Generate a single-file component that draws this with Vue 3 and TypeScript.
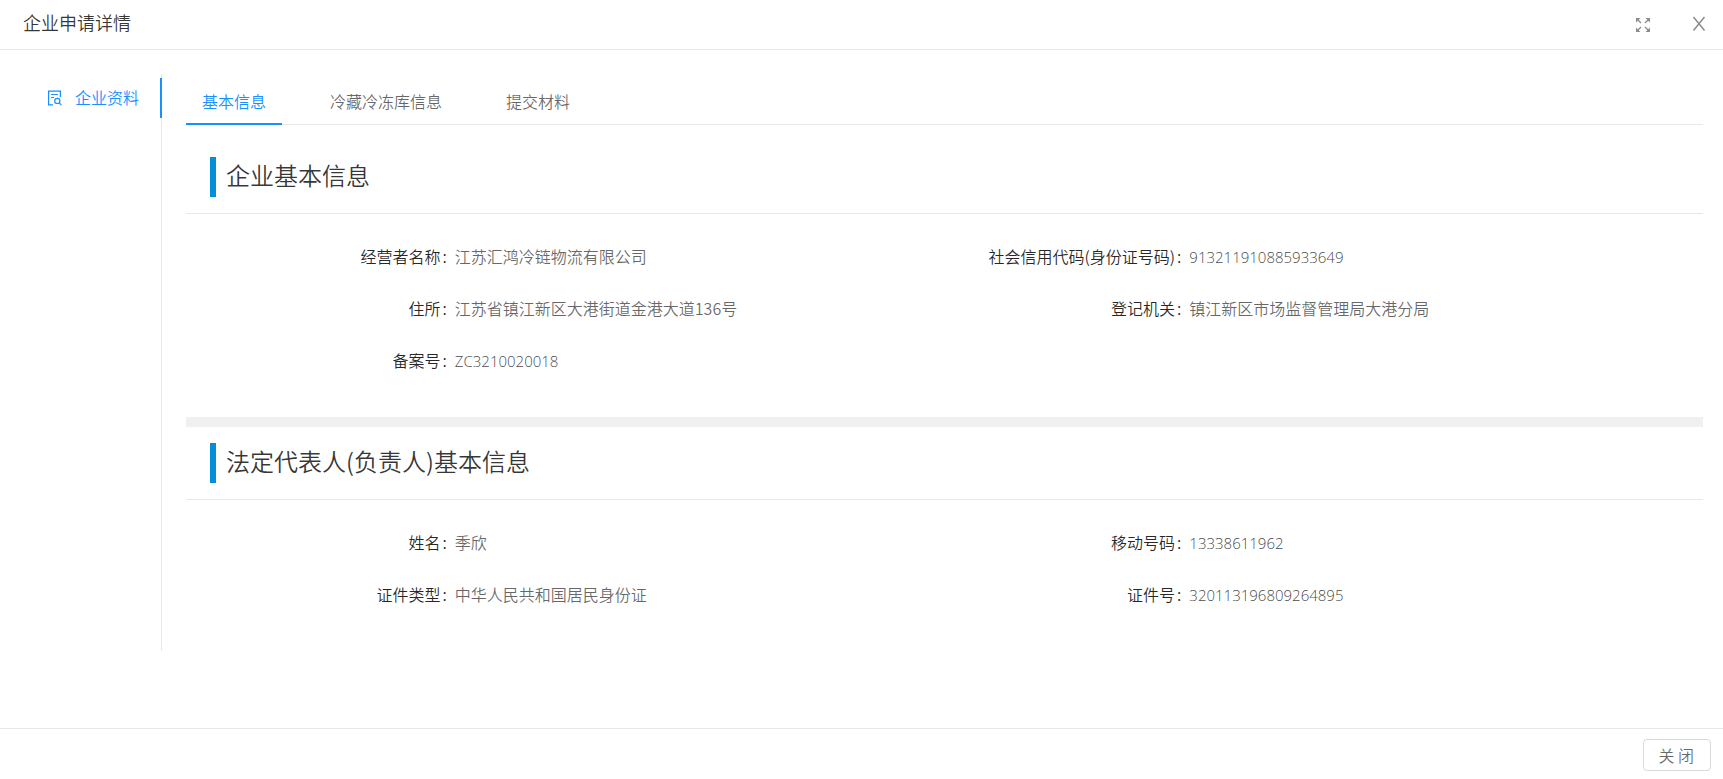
<script setup lang="ts">
import { ref } from 'vue'

interface Field {
  label: string
  value: string
  numeric?: boolean
}

interface Section {
  title: string
  fields: Field[]
}

const tabs: string[] = ['基本信息', '冷藏冷冻库信息', '提交材料']
const activeTab = ref<number>(0)

const sections: Section[] = [
  {
    title: '企业基本信息',
    fields: [
      { label: '经营者名称', value: '江苏汇鸿冷链物流有限公司' },
      { label: '社会信用代码(身份证号码)', value: '913211910885933649', numeric: true },
      { label: '住所', value: '江苏省镇江新区大港街道金港大道136号' },
      { label: '登记机关', value: '镇江新区市场监督管理局大港分局' },
      { label: '备案号', value: 'ZC3210020018', numeric: true },
    ],
  },
  {
    title: '法定代表人(负责人)基本信息',
    fields: [
      { label: '姓名', value: '季欣' },
      { label: '移动号码', value: '13338611962', numeric: true },
      { label: '证件类型', value: '中华人民共和国居民身份证' },
      { label: '证件号', value: '320113196809264895', numeric: true },
    ],
  },
]
</script>

<template>
  <div class="dialog" role="dialog" aria-labelledby="dialog-title">
    <header class="header">
      <h1 id="dialog-title" class="title">企业申请详情</h1>
      <div class="tools">
        <button type="button" class="tool" aria-label="全屏">
          <svg width="14" height="14" viewBox="0 0 14 14" fill="none" stroke="currentColor">
            <path stroke-width="1.3" d="M1 1L5 5M13 1L9 5M1 13L5 9M13 13L9 9" />
            <path fill="currentColor" stroke="none" d="M0 0H4.5L0 4.5ZM14 0V4.5L9.5 0ZM0 14V9.5L4.5 14ZM14 14H9.5L14 9.5Z" />
          </svg>
        </button>
        <button type="button" class="tool close-icon" aria-label="关闭窗口">
          <svg width="14" height="16" viewBox="0 0 14 16" fill="none" stroke="currentColor" stroke-width="1.5">
            <path d="M1.5 1L12.5 14.5M12.5 1L1.5 14.5" />
          </svg>
        </button>
      </div>
    </header>

    <div class="body">
      <nav class="side">
        <a href="#" class="side-item" aria-current="page" @click.prevent>
          <svg class="side-icon" width="16" height="16" viewBox="0 0 16 16" fill="none" stroke="currentColor">
            <path stroke-width="1.2" d="M6 14.9H1.6V1.1H13.4V7M4 4.5H11M4 7.5H7" />
            <circle cx="10.3" cy="10.9" r="2.6" stroke-width="1.2" />
            <path stroke-width="1.2" d="M12.2 12.8L14.4 15.2" />
          </svg>
          <span class="side-text">企业资料</span>
        </a>
      </nav>

      <main class="content">
        <div class="tabs" role="tablist">
          <button
            v-for="(tab, index) in tabs"
            :key="tab"
            type="button"
            role="tab"
            class="tab"
            :class="{ active: index === activeTab }"
            :aria-selected="index === activeTab"
            @click="activeTab = index"
          >{{ tab }}</button>
        </div>

        <section v-for="section in sections" :key="section.title" class="section">
          <div class="section-head">
            <h2 class="section-title">{{ section.title }}</h2>
          </div>
          <dl class="fields">
            <div v-for="field in section.fields" :key="field.label" class="field">
              <dt class="label">{{ field.label }}</dt>
              <dd class="value" :class="{ numeric: field.numeric }">{{ field.value }}</dd>
            </div>
          </dl>
        </section>
      </main>
    </div>

    <footer class="footer">
      <button type="button" class="close">关 闭</button>
    </footer>
  </div>
</template>

<style>
body {
  background: #fff;
}
</style>

<style scoped>
.dialog {
  display: flex;
  flex-direction: column;
  box-sizing: border-box;
  min-height: 100vh;
  font-family: "Noto Sans CJK SC", sans-serif;
  font-size: 16px;
  font-weight: 350;
  line-height: 24px;
  color: rgba(0, 0, 0, 0.6);
}

button {
  margin: 0;
  font: inherit;
  color: inherit;
  background: none;
  border: 0;
  cursor: pointer;
}

.header {
  display: flex;
  align-items: center;
  justify-content: space-between;
  height: 49px;
  padding: 0 17px 0 23px;
  border-bottom: 1px solid #e8e8e8;
}

.title {
  margin: 0 0 6px;
  font-size: 18px;
  font-weight: 350;
  color: rgba(0, 0, 0, 0.8);
}

.tools {
  display: flex;
  align-items: center;
  gap: 42px;
}

.tool {
  display: flex;
  padding: 0;
  color: #8c8c8c;
}

.close-icon {
  padding-bottom: 2px;
}

.body {
  display: flex;
  flex: 1;
  align-items: flex-start;
  padding: 24px 20px 0 0;
}

.side {
  display: flex;
  flex-direction: column;
  align-self: flex-start;
  box-sizing: border-box;
  width: 162px;
  min-height: 577px;
  padding-top: 4px;
  border-right: 1px solid #e8e8e8;
}

.side-item {
  display: flex;
  align-items: center;
  gap: 12px;
  height: 40px;
  margin-right: -1px;
  padding-left: 47px;
  border-right: 2px solid #1890ff;
  color: #1890ff;
  text-decoration: none;
}

.side-text {
  padding-bottom: 2px;
}

.content {
  flex: 1;
  min-width: 0;
  margin-left: 24px;
}

.tabs {
  display: flex;
  gap: 32px;
  margin-bottom: 16px;
  padding-top: 4px;
  box-shadow: inset 0 -1px #e8e8e8;
}

.tab {
  height: 47px;
  padding: 0 16px;
  border-bottom: 2px solid transparent;
}

.tab.active {
  color: #1890ff;
  border-bottom-color: #1890ff;
}

.section + .section {
  border-top: 10px solid #f0f0f0;
}

.section-head {
  padding: 16px 24px;
  border-bottom: 1px solid #e8e8e8;
}

.section-title {
  margin: 0;
  padding: 0 0 4px 10px;
  border-left: 6px solid #028fd7;
  font-size: 24px;
  font-weight: 350;
  line-height: 36px;
  color: rgba(0, 0, 0, 0.8);
}

.fields {
  display: grid;
  grid-template-columns: 1fr 1fr;
  row-gap: 14px;
  margin: 0;
  padding: 23px 24px 38px;
}

.field {
  display: grid;
  grid-template-columns: 1fr 2fr;
  align-items: baseline;
  line-height: 38px;
}

.label {
  text-align: right;
  color: rgba(0, 0, 0, 0.85);
}

.label::after {
  content: ":";
  margin: 0 8px 0 2px;
}

.value {
  margin: 0;
}

.numeric {
  font-family: "Open Sans", "Noto Sans", sans-serif;
  font-size: 15px;
  line-height: 32px;
  color: rgba(0, 0, 0, 0.75);
}

.footer {
  display: flex;
  justify-content: flex-end;
  padding: 10px 12px 8px;
  border-top: 1px solid #e8e8e8;
}

.close {
  height: 32px;
  padding: 0 16px 0 14px;
  border: 1px solid #d9d9d9;
  border-radius: 4px;
  line-height: 30px;
}
</style>
